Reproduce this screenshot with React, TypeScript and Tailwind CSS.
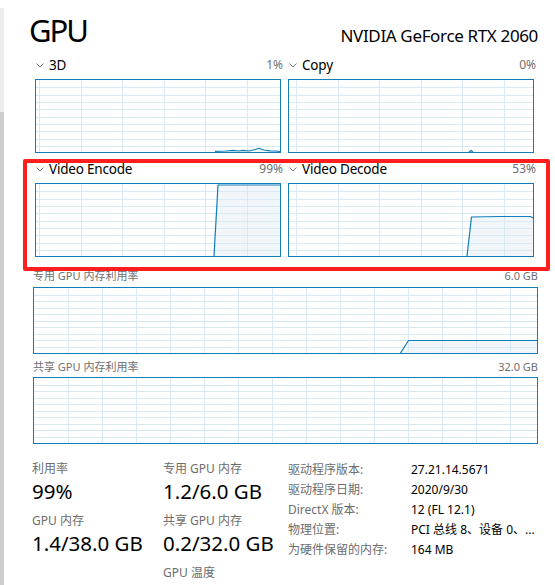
import clsx from "clsx";

const GRID = "#d9eaf4";
const BLUE = "#117dbb";

type GraphProps = {
  w: number;
  h: number;
  xStart: number;
  xStep: number;
  yStep: number;
  fill?: string;
  line?: string;
  className?: string;
};

function Graph({ w, h, xStart, xStep, yStep, fill, line, className }: GraphProps) {
  const xs: number[] = [];
  for (let x = xStart; x < w; x += xStep) xs.push(Math.round(x) + 0.5);
  const ys: number[] = [];
  for (let i = 1; i * yStep < h - 2; i++) ys.push(Math.round(i * yStep) + 0.5);

  return (
    <div className={clsx("border border-[#117dbb] bg-white", className)}>
      <svg width={w} height={h} className="block">
        {fill && <polygon points={fill} fill="#f1f6fa" />}
        {xs.map((x) => (
          <line key={"v" + x} x1={x} x2={x} y1={0} y2={h} stroke={GRID} strokeWidth={1} />
        ))}
        {ys.map((y) => (
          <line key={"h" + y} x1={0} x2={w} y1={y} y2={y} stroke={GRID} strokeWidth={1} />
        ))}
        {line && <polyline points={line} fill="none" stroke={BLUE} strokeWidth={1.2} />}
      </svg>
    </div>
  );
}

function Chevron() {
  return (
    <svg width="8" height="5" viewBox="0 0 8 5" className="ml-[1px] mr-[5px]">
      <polyline points="0.5,0.5 4,4 7.5,0.5" fill="none" stroke="#7a7a7a" strokeWidth="1" />
    </svg>
  );
}

type EngineProps = {
  title: string;
  pct: string;
  col: 0 | 1;
  fill?: string;
  line?: string;
};

function Engine({ title, pct, col, fill, line }: EngineProps) {
  return (
    <div className="flex flex-col">
      <div className="h-[20px] flex items-center justify-between -mr-[2px]">
        <div className="flex items-center">
          <Chevron />
          <span className="text-[13.5px] leading-[20px] tracking-[-0.2px] text-black">{title}</span>
        </div>
        <span className="text-[12px] leading-[20px] text-[#707070]">{pct}</span>
      </div>
      <Graph
        w={244}
        h={72}
        xStart={col === 0 ? 3 : 7}
        xStep={41.5}
        yStep={7.33}
        fill={fill}
        line={line}
        className="mt-[4px]"
      />
    </div>
  );
}

const specs: [string, string][] = [
  ["驱动程序版本:", "27.21.14.5671"],
  ["驱动程序日期:", "2020/9/30"],
  ["DirectX 版本:", "12 (FL 12.1)"],
  ["物理位置:", "PCI 总线 8、设备 0、..."],
  ["为硬件保留的内存:", "164 MB"],
];

function Stat({ label, value }: { label: string; value?: string }) {
  return (
    <div className="flex flex-col">
      <div className="text-[12px] leading-[18px] text-[#6d6d6d]">{label}</div>
      {value && <div className="text-[20.5px] leading-[26px] text-black">{value}</div>}
    </div>
  );
}

export default function App() {
  return (
    <div className="relative w-[555px] h-[585px] bg-white flex overflow-hidden font-['Noto_Sans','Noto_Sans_CJK_SC',sans-serif]">
      {/* scrollbar strip */}
      <div className="w-[4px] flex flex-col">
        <div className="h-[8px] bg-white" />
        <div className="h-[104px] bg-[#ececec]" />
        <div className="flex-1 bg-[#cdcdcd]" />
      </div>

      <div className="flex-1 flex flex-col pl-[29px] pr-[17px]">
        <div className="h-[55px] pt-[12px] flex items-baseline justify-between -ml-[4px]">
          <span className="text-[31px] leading-[36px] text-black tracking-[-2px]">GPU</span>
          <span className="text-[17px] leading-[24px] text-black tracking-[-0.35px]">NVIDIA GeForce RTX 2060</span>
        </div>

        <div className="ml-[2px] grid grid-cols-[246px_246px] gap-x-[7px] gap-y-[6px]">
          <Engine
            title="3D"
            pct="1%"
            col={0}
            fill="179,72 179,71.3 190,71 197,70.3 203,71 207,70.3 213,71 219,69.5 223,68.3 228,70 234,70.8 240,71 244,71.5 244,72"
            line="179,71.3 190,71 197,70.3 203,71 207,70.3 213,71 219,69.5 223,68.3 228,70 234,70.8 240,71 244,71.5"
          />
          <Engine
            title="Copy"
            pct="0%"
            col={1}
            fill="180,72 182,70.5 184,72"
            line="180,72 182,70.5 184,72"
          />
          <Engine
            title="Video Encode"
            pct="99%"
            col={0}
            fill="178,72 182,1 244,1 244,72"
            line="178,72 182,1 244,1"
          />
          <Engine
            title="Video Decode"
            pct="53%"
            col={1}
            fill="178,72 182.5,33 211.5,32.5 241.5,32.5 244,34 244,72"
            line="178,72 182.5,33 211.5,32.5 241.5,32.5 244,34"
          />
        </div>

        <div className="mt-[11px] h-[16px] flex items-center justify-between text-[11px] text-[#707070]">
          <span>专用 GPU 内存利用率</span>
          <span>6.0 GB</span>
        </div>
        <Graph
          w={503}
          h={65}
          xStart={33.7}
          xStep={34}
          yStep={6.55}
          fill="366.5,65 374.5,52.5 503,52.5 503,65"
          line="366.5,65 374.5,52.5 503,52.5"
          className="mt-[3px]"
        />

        <div className="mt-[5px] h-[16px] flex items-center justify-between text-[11px] text-[#707070]">
          <span>共享 GPU 内存利用率</span>
          <span>32.0 GB</span>
        </div>
        <Graph w={503} h={65} xStart={33.7} xStep={34} yStep={6.55} className="mt-[2px]" />

        <div className="mt-[16px] flex">
          <div className="w-[131px] flex flex-col gap-[8px] -ml-[1px]">
            <Stat label="利用率" value="99%" />
            <Stat label="GPU 内存" value="1.4/38.0 GB" />
          </div>
          <div className="w-[125px] flex flex-col gap-[8px]">
            <Stat label="专用 GPU 内存" value="1.2/6.0 GB" />
            <Stat label="共享 GPU 内存" value="0.2/32.0 GB" />
            <Stat label="GPU 温度" />
          </div>
          <div className="flex flex-col text-[12px]">
            {specs.map(([k, v]) => (
              <div key={k} className="h-[20px] flex items-center">
                <span className="w-[123px] text-[#6d6d6d]">{k}</span>
                <span className="text-black whitespace-nowrap">{v}</span>
              </div>
            ))}
          </div>
        </div>
      </div>

      {/* annotation */}
      <div className="absolute left-[23px] top-[159px] w-[527px] h-[112px] border-[4px] border-[#ff1e1e] rounded-[2px] pointer-events-none" />
    </div>
  );
}
